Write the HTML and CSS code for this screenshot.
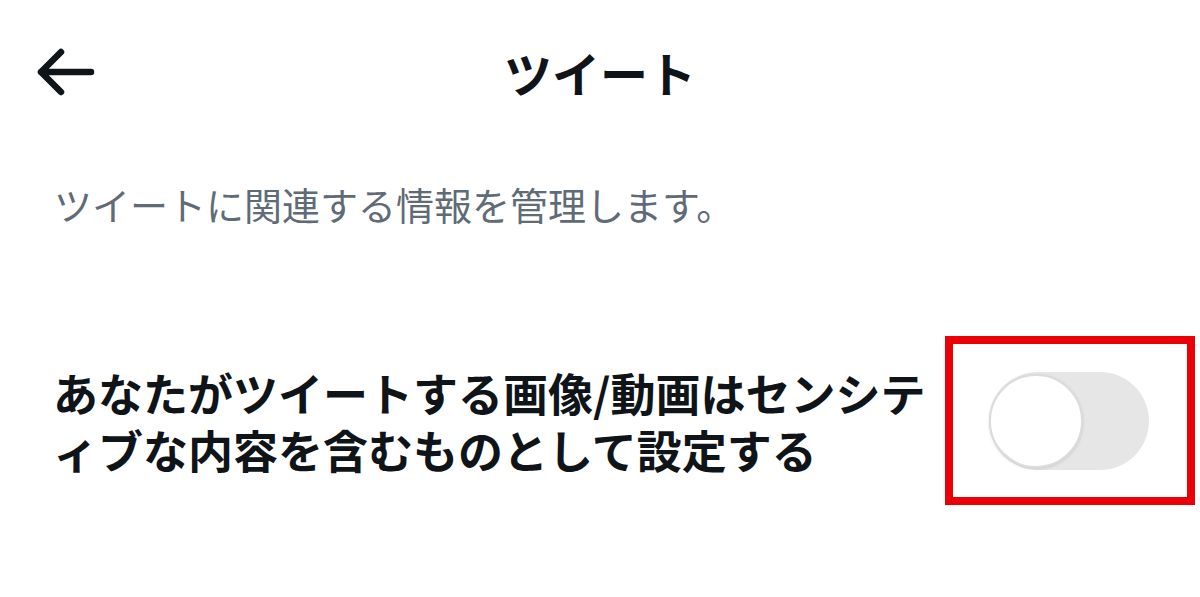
FILE: index.html
```html
<!DOCTYPE html>
<html lang="ja">
<head>
<meta charset="utf-8">
<title>ツイート</title>
<link rel="stylesheet" href="styles.css">
</head>
<body>
<div class="page">
  <header class="header">
    <div class="back">
      <svg class="back-icon" viewBox="0 0 60 50" width="60" height="50" aria-hidden="true">
        <path d="M56 25 H6 M26 5 L6 25 L26 45" fill="none" stroke="#0f1419" stroke-width="6.5" stroke-linecap="round" stroke-linejoin="round"/>
      </svg>
    </div>
    <h1 class="title">ツイート</h1>
    <div class="spacer"></div>
  </header>
  <p class="desc">ツイートに関連する情報を管理します。</p>
  <div class="setting">
    <div class="setting-label">あなたがツイートする画像/動画はセンシテ<br>ィブな内容を含むものとして設定する</div>
    <div class="highlight">
      <div class="switch">
        <div class="knob"></div>
      </div>
    </div>
  </div>
</div>
</body>
</html>
```

FILE: styles.css
```css
html, body {
  margin: 0;
  padding: 0;
  background: #ffffff;
}

body {
  font-family: "Noto Sans CJK JP", "Noto Sans", sans-serif;
  color: #0f1419;
  width: 1200px;
  height: 597px;
  overflow: hidden;
}

.page {
  display: flex;
  flex-direction: column;
}

.header {
  height: 144px;
  display: grid;
  grid-template-columns: 1fr auto 1fr;
  align-items: center;
}

.back {
  padding-left: 35px;
  display: flex;
  align-items: center;
}

.back-icon {
  display: block;
}

.title {
  margin: 0;
  font-size: 48px;
  font-weight: 700;
  line-height: 60px;
  letter-spacing: 0;
}

.desc {
  margin: 34px 0 0 0;
  padding-left: 54px;
  font-size: 38px;
  line-height: 52px;
  color: #5f6b76;
  font-weight: 400;
}

.setting {
  margin-top: 106px;
  display: flex;
  align-items: center;
  padding-left: 53px;
  padding-right: 5px;
}

.setting-label {
  flex: 1;
  font-size: 45px;
  font-weight: 700;
  line-height: 57px;
  color: #0f1419;
}

.highlight {
  width: 234px;
  height: 153px;
  border: 8px solid #ec0008;
  display: flex;
  align-items: center;
  justify-content: center;
}

.switch {
  width: 160px;
  height: 98px;
  border-radius: 49px;
  background: #e6e6e6;
  display: flex;
  align-items: center;
  margin-left: -3px;
}

.knob {
  width: 90px;
  height: 90px;
  border-radius: 50%;
  background: #ffffff;
  border: 2px solid #dcdcdc;
  box-shadow: 0 1px 3px rgba(0, 0, 0, 0.12);
}
```
